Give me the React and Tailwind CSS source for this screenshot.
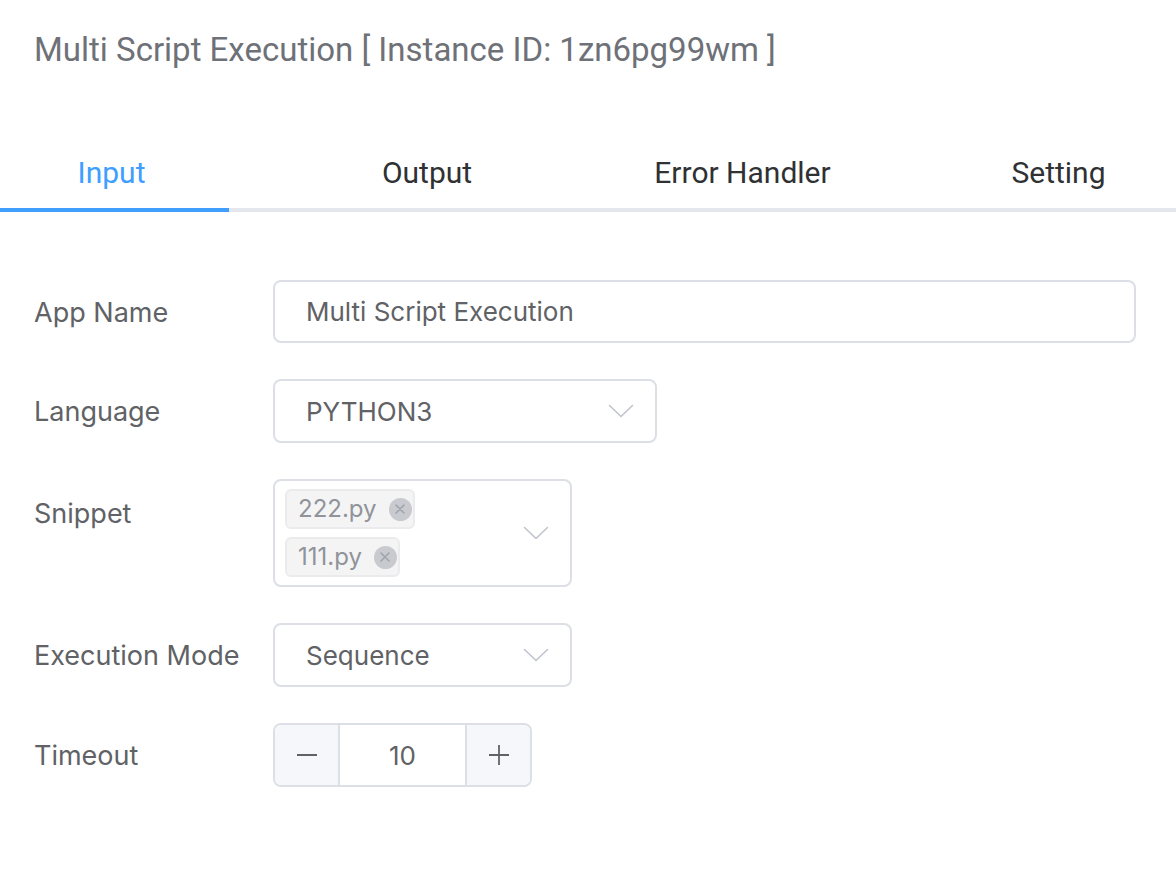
import React from "react";

const Chevron = ({ className = "" }) => (
  <svg className={className} width="26" height="14" viewBox="0 0 26 14" fill="none">
    <path d="M1.5 1.5 L13 12.5 L24.5 1.5" stroke="#c0c4cc" strokeWidth="1.6" strokeLinecap="round" strokeLinejoin="round" />
  </svg>
);

const Tag = ({ label }) => (
  <div className="flex h-[40px] items-center self-start rounded-[6px] border-2 border-[#ebebed] bg-[#f4f4f5] pl-[11px] pr-[1px]">
    <span className="text-[24px] text-[#909399]">{label}</span>
    <span className="ml-[12px] flex h-[23px] w-[23px] items-center justify-center rounded-full bg-[#c8cad0]">
      <svg width="12" height="12" viewBox="0 0 12 12">
        <path d="M2 2 L10 10 M10 2 L2 10" stroke="#a0a3aa" strokeWidth="1.5" strokeLinecap="round" />
      </svg>
    </span>
  </div>
);

const Row = ({ label, children, labelTop = false }) => (
  <div className={`flex ${labelTop ? "items-start" : "items-center"}`}>
    <div className={`w-[239px] shrink-0 text-[27px] text-[#606266] ${labelTop ? "pt-[15px]" : "pt-[3px]"}`}>{label}</div>
    {children}
  </div>
);

export default function App() {
  return (
    <div className="min-h-[878px] w-[1176px] bg-white" style={{ fontFamily: "Inter, 'Noto Sans', sans-serif" }}>
      <div className="px-[34px] pt-[29px] text-[33px] leading-[42px] text-[#6e7178]" style={{ fontFamily: "Roboto, 'Noto Sans', sans-serif" }}>
        Multi Script Execution [ Instance ID: 1zn6pg99wm ]
      </div>

      <div className="mt-[78px] flex h-[63px] items-start border-b-4 border-[#e4e7ed] text-[30px] leading-[40px] text-[#303133]" style={{ fontFamily: "Roboto, 'Noto Sans', sans-serif" }}>
        <div className="relative flex h-full w-[229px] shrink-0 justify-center pr-[6px] pt-[4px] text-[#409eff]">
          Input
          <div className="absolute bottom-[-4px] left-0 h-[4px] w-full bg-[#409eff]" />
        </div>
        <div className="flex w-[396px] shrink-0 justify-center pt-[4px]">Output</div>
        <div className="flex w-[235px] shrink-0 justify-center pt-[4px]">Error Handler</div>
        <div className="w-[81px] shrink-0" />
        <div className="flex w-[235px] shrink-0 justify-center pt-[4px]">Setting</div>
      </div>

      <div className="flex flex-col gap-[36px] px-[34px] pt-[68px]">
        <Row label="App Name">
          <div className="flex h-[63px] w-[863px] items-center rounded-[8px] border-2 border-[#dcdfe6] pl-[31px] text-[26px] text-[#606266]">
            Multi Script Execution
          </div>
        </Row>

        <Row label="Language">
          <div className="flex h-[64px] w-[384px] items-center justify-between rounded-[8px] border-2 border-[#dcdfe6] pl-[31px] pr-[21px] text-[26px] text-[#606266]">
            <span>PYTHON3</span>
            <Chevron />
          </div>
        </Row>

        <Row label="Snippet" labelTop>
          <div className="flex h-[108px] w-[299px] items-center justify-between rounded-[8px] border-2 border-[#dcdfe6] pl-[10px] pr-[21px]">
            <div className="flex flex-col gap-[8px]">
              <Tag label="222.py" />
              <Tag label="111.py" />
            </div>
            <Chevron />
          </div>
        </Row>

        <Row label="Execution Mode">
          <div className="flex h-[64px] w-[299px] items-center justify-between rounded-[8px] border-2 border-[#dcdfe6] pl-[31px] pr-[21px] text-[26px] text-[#606266]">
            <span>Sequence</span>
            <Chevron />
          </div>
        </Row>

        <Row label="Timeout">
          <div className="flex h-[64px] w-[259px] overflow-hidden rounded-[8px] border-2 border-[#dcdfe6] text-[26px] text-[#606266]">
            <div className="flex w-[65px] items-center justify-center border-r-2 border-[#dcdfe6] bg-[#f5f7fa]">
              <svg width="22" height="4" viewBox="0 0 22 4"><path d="M1 2 H21" stroke="#606266" strokeWidth="1.8" /></svg>
            </div>
            <div className="flex flex-1 items-center justify-center">10</div>
            <div className="flex w-[65px] items-center justify-center border-l-2 border-[#dcdfe6] bg-[#f5f7fa]">
              <svg width="22" height="22" viewBox="0 0 22 22"><path d="M1 11 H21 M11 1 V21" stroke="#606266" strokeWidth="1.8" /></svg>
            </div>
          </div>
        </Row>
      </div>
    </div>
  );
}
